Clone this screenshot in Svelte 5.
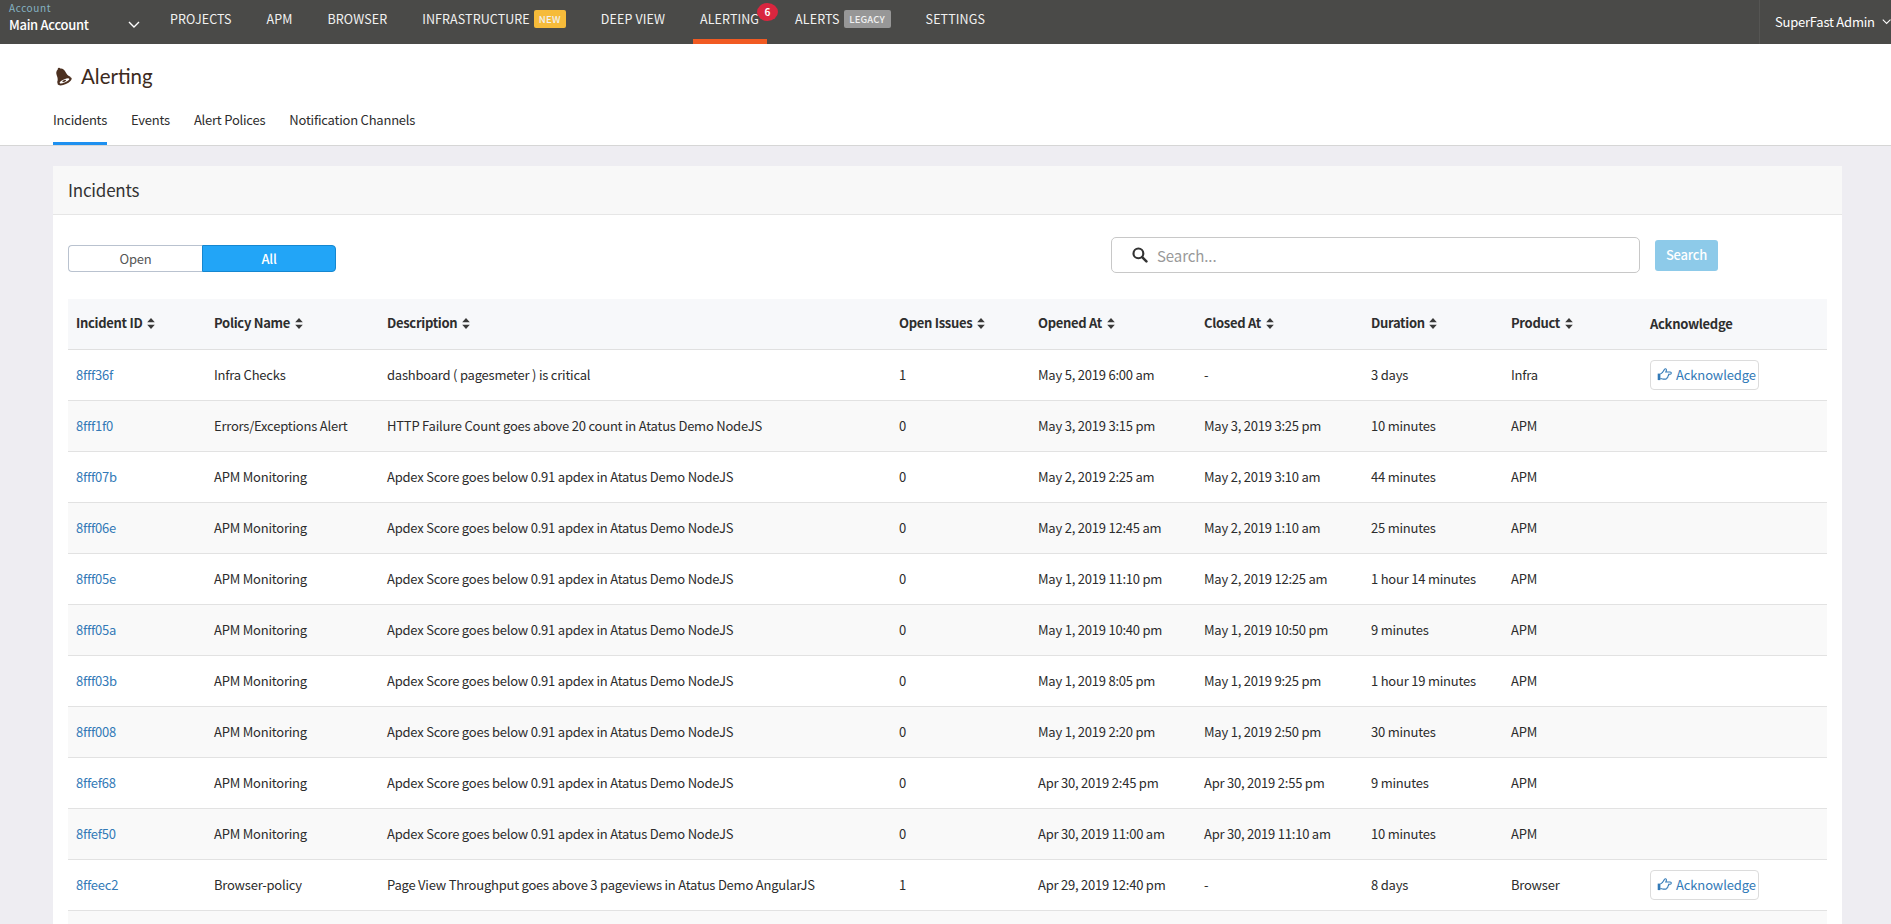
<script>
  const navItems = [
    { label: 'PROJECTS' },
    { label: 'APM' },
    { label: 'BROWSER' },
    { label: 'INFRASTRUCTURE', tag: 'NEW', tagClass: 'new' },
    { label: 'DEEP VIEW' },
    { label: 'ALERTING', active: true, count: 6 },
    { label: 'ALERTS', tag: 'LEGACY', tagClass: 'legacy' },
    { label: 'SETTINGS' }
  ];
  const tabs = ['Incidents', 'Events', 'Alert Polices', 'Notification Channels'];
  const cols = ['Incident ID', 'Policy Name', 'Description', 'Open Issues', 'Opened At', 'Closed At', 'Duration', 'Product'];
  const apdex = 'Apdex Score goes below 0.91 apdex in Atatus Demo NodeJS';
  const rows = [
    ['8fff36f', 'Infra Checks', 'dashboard ( pagesmeter ) is critical', '1', 'May 5, 2019 6:00 am', '-', '3 days', 'Infra', true],
    ['8fff1f0', 'Errors/Exceptions Alert', 'HTTP Failure Count goes above 20 count in Atatus Demo NodeJS', '0', 'May 3, 2019 3:15 pm', 'May 3, 2019 3:25 pm', '10 minutes', 'APM'],
    ['8fff07b', 'APM Monitoring', apdex, '0', 'May 2, 2019 2:25 am', 'May 2, 2019 3:10 am', '44 minutes', 'APM'],
    ['8fff06e', 'APM Monitoring', apdex, '0', 'May 2, 2019 12:45 am', 'May 2, 2019 1:10 am', '25 minutes', 'APM'],
    ['8fff05e', 'APM Monitoring', apdex, '0', 'May 1, 2019 11:10 pm', 'May 2, 2019 12:25 am', '1 hour 14 minutes', 'APM'],
    ['8fff05a', 'APM Monitoring', apdex, '0', 'May 1, 2019 10:40 pm', 'May 1, 2019 10:50 pm', '9 minutes', 'APM'],
    ['8fff03b', 'APM Monitoring', apdex, '0', 'May 1, 2019 8:05 pm', 'May 1, 2019 9:25 pm', '1 hour 19 minutes', 'APM'],
    ['8fff008', 'APM Monitoring', apdex, '0', 'May 1, 2019 2:20 pm', 'May 1, 2019 2:50 pm', '30 minutes', 'APM'],
    ['8ffef68', 'APM Monitoring', apdex, '0', 'Apr 30, 2019 2:45 pm', 'Apr 30, 2019 2:55 pm', '9 minutes', 'APM'],
    ['8ffef50', 'APM Monitoring', apdex, '0', 'Apr 30, 2019 11:00 am', 'Apr 30, 2019 11:10 am', '10 minutes', 'APM'],
    ['8ffeec2', 'Browser-policy', 'Page View Throughput goes above 3 pageviews in Atatus Demo AngularJS', '1', 'Apr 29, 2019 12:40 pm', '-', '8 days', 'Browser', true]
  ];
</script>

<div class="page">
  <header class="topbar">
    <div class="account">
      <div class="account-text">
        <span class="account-label">Account</span>
        <span class="account-name">Main Account</span>
      </div>
      <svg class="chev" width="12" height="7" viewBox="0 0 12 7"><path d="M1 1l5 5 5-5" fill="none" stroke="#fff" stroke-width="1.4"/></svg>
    </div>
    <nav class="nav">
      {#each navItems as item}
        <div class="nav-item" class:active={item.active}>
          <span>{item.label}</span>
          {#if item.tag}<span class="tag {item.tagClass}">{item.tag}</span>{/if}
          {#if item.count}<span class="count">{item.count}</span>{/if}
        </div>
      {/each}
    </nav>
    <div class="user">
      <span>SuperFast Admin</span>
      <svg width="12" height="7" viewBox="0 0 12 7"><path d="M1 1l5 5 5-5" fill="none" stroke="#fff" stroke-width="1.3"/></svg>
    </div>
  </header>

  <section class="subhead">
    <h1>
      <svg class="bell" width="19" height="20" viewBox="0 0 19 20">
        <g transform="rotate(-24 9.5 10)">
          <path d="M9 1c.9 0 1.400.5 1.500 1.200 2.300.6 3.300 2.700 3.400 5 .1 2.600.6 4.600 2.300 6.200.4.400.2 1-.4 1H2.600c-.6 0-.8-.6-.4-1 1.700-1.600 2.200-3.600 2.300-6.200.1-2.300 1.100-4.400 3.300-5C7.900 1.500 8.400 1 9 1z" fill="#4c3020"/>
          <ellipse cx="9.300" cy="15.600" rx="7.600" ry="3.200" fill="#4c3020"/>
          <ellipse cx="9.300" cy="15.300" rx="5.200" ry="1.500" fill="#fff"/>
          <ellipse cx="9" cy="15.300" rx="2" ry="0.900" fill="#4c3020"/>
        </g>
      </svg>
      <span>Alerting</span>
    </h1>
    <div class="tabs">
      {#each tabs as tab, i}
        <div class="tab" class:current={i === 0}>{tab}</div>
      {/each}
    </div>
  </section>

  <main class="content">
    <section class="card">
      <div class="card-head">Incidents</div>
      <div class="card-body">
        <div class="toolbar">
          <div class="toggle">
            <div class="opt">Open</div>
            <div class="opt on">All</div>
          </div>
          <div class="search-area">
            <div class="search">
              <svg width="16" height="16" viewBox="0 0 15 15"><circle cx="6" cy="6" r="4.600" fill="none" stroke="#333" stroke-width="2"/><path d="M9.500 9.500l4 4" stroke="#333" stroke-width="2.400" stroke-linecap="round"/></svg>
              <span>Search...</span>
            </div>
            <div class="search-btn">Search</div>
          </div>
        </div>

        <table>
          <colgroup>
            <col style="width:138px"/><col style="width:173px"/><col style="width:512px"/><col style="width:139px"/><col style="width:166px"/><col style="width:167px"/><col style="width:140px"/><col style="width:139px"/><col/>
          </colgroup>
          <thead>
            <tr>
              {#each cols as c}
                <th>
                  {c}
                  <svg class="sort" width="8" height="11" viewBox="0 0 8 11"><path d="M4 0l3.800 4.200H.2zM4 11L.2 6.800h7.600z" fill="#3a3a3a"/></svg>
                </th>
              {/each}
              <th class="ack-h">Acknowledge</th>
            </tr>
          </thead>
          <tbody>
            {#each rows as r}
              <tr>
                <td class="id">{r[0]}</td>
                {#each r.slice(1, 8) as v}<td>{v}</td>{/each}
                <td>
                  {#if r[8]}
                    <div class="ack">
                      <svg width="15" height="13" viewBox="0 0 15 13">
                        <path d="M3.400 6c1.500-.6 2.700-2 3.400-3.400.4-.8.500-1.900 1.500-1.900 1 0 1.400 1.100.9 2.300l-.4 1h4.400c.7 0 1.100.5 1.100 1.100s-.5 1.100-1.100 1.100h-1.500c.2.900-.1 1.500-.7 1.800.1.800-.2 1.400-.8 1.600 0 1-.6 1.500-1.500 1.500H6.300c-1 0-1.800-.4-2.900-.6" fill="none" stroke="#337ab7" stroke-width="1.100"/>
                        <path d="M.7 5.600h2.700v6.500H.7z" fill="#337ab7"/>
                      </svg>
                      <span>Acknowledge</span>
                    </div>
                  {/if}
                </td>
              </tr>
            {/each}
            <tr class="blank"><td colspan="9"></td></tr>
          </tbody>
        </table>
      </div>
    </section>
  </main>
</div>

<style>
  :global(body) {
    margin: 0;
    background: #eeedf2;
  }
  .page {
    height: 924px;
    overflow: hidden;
    font-family: "Noto Sans CJK SC", "Noto Sans", sans-serif;
    font-size: 13px;
    letter-spacing: -0.22px;
    color: #2c2c2c;
    background: #eeedf2;
  }
  .topbar {
    height: 44px;
    background: #4a4a48;
    display: flex;
    color: #fff;
  }
  .account {
    width: 163px;
    flex-shrink: 0;
    box-sizing: border-box;
    padding-left: 9px;
    display: flex;
    position: relative;
  }
  .account-text {
    display: flex;
    flex-direction: column;
    padding-top: 2px;
  }
  .account-label {
    font-size: 10px;
    line-height: 12px;
    letter-spacing: 0.6px;
    color: #86b4c4;
  }
  .account-name {
    font-size: 13px;
    line-height: 18px;
    font-weight: 500;
    margin-top: 2px;
    letter-spacing: -0.3px;
  }
  .chev {
    position: absolute;
    left: 128px;
    top: 21px;
  }
  .nav {
    display: flex;
    flex: 1;
    gap: 21px;
  }
  .nav-item {
    position: relative;
    display: flex;
    align-items: flex-start;
    padding: 10px 7px 0;
    box-sizing: border-box;
    height: 44px;
    font-size: 12.5px;
    line-height: 18px;
    letter-spacing: 0.1px;
    color: #f1f1f1;
  }
  .nav-item.active {
    padding-right: 8px;
    border-bottom: 5px solid #f15a22;
  }
  .tag {
    margin-left: 4px;
    height: 18px;
    line-height: 19px;
    font-size: 9.5px;
    border-radius: 2px;
    text-align: center;
    letter-spacing: 0.3px;
    font-weight: 500;
  }
  .new { width: 32px; background: #f6bb3a; }
  .legacy { width: 47px; background: #979797; letter-spacing: 0.2px; }
  .count {
    position: absolute;
    left: 64px;
    top: 3px;
    width: 21px;
    height: 18px;
    border-radius: 50%;
    background: #d9263f;
    color: #fff;
    font-size: 10px;
    line-height: 17px;
    letter-spacing: 0;
    text-align: center;
    font-weight: 700;
  }
  .user {
    width: 132px;
    flex-shrink: 0;
    white-space: nowrap;
    box-sizing: border-box;
    border-left: 1px solid #555553;
    padding-left: 15px;
    display: flex;
    align-items: center;
    gap: 7px;
    font-size: 13px;
    height: 44px;
    padding-bottom: 1px;
  }
  .subhead {
    height: 101px;
    background: #fff;
    border-bottom: 1px solid #d6d6d6;
    padding-left: 53px;
  }
  h1 {
    margin: 0;
    padding-top: 19px;
    display: flex;
    align-items: center;
    gap: 9px;
    font-family: Lato, sans-serif;
    font-weight: 400;
    font-size: 20.5px;
    letter-spacing: 0;
    line-height: 26px;
    color: #3c2a20;
    height: 26px;
  }
  .tabs {
    display: flex;
    gap: 24px;
    margin-top: 16px;
  }
  .tab {
    height: 40px;
    box-sizing: border-box;
    padding-top: 5px;
    line-height: 20px;
    color: #2d2d2d;
  }
  .tab.current { border-bottom: 3px solid #1e90f0; }
  .content { padding: 20px 49px 0 53px; }
  .card {
    background: #fff;
    border-radius: 2px;
  }
  .card-head {
    height: 48px;
    background: #f8f8f8;
    border-bottom: 1px solid #e6e6e6;
    padding-left: 15px;
    font-size: 17px;
    line-height: 48px;
    color: #333;
  }
  .card-body { padding: 22px 15px 0; }
  .toolbar {
    display: flex;
    justify-content: space-between;
    height: 62px;
  }
  .toggle {
    display: flex;
    margin-top: 8px;
    height: 27px;
  }
  .opt {
    width: 134px;
    box-sizing: border-box;
    text-align: center;
    line-height: 25px;
    border: 1px solid #b9c2cf;
    color: #555;
    border-right: 0;
    border-radius: 4px 0 0 4px;
  }
  .opt.on {
    background: #22a5f7;
    border: 1px solid #1587d0;
    color: #fff;
    border-radius: 0 4px 4px 0;
    font-weight: 500;
  }
  .search-area {
    display: flex;
    align-items: flex-start;
    gap: 15px;
    margin-right: 109px;
  }
  .search {
    width: 529px;
    height: 36px;
    box-sizing: border-box;
    border: 1px solid #c8c8c8;
    border-radius: 5px;
    display: flex;
    align-items: center;
    gap: 9px;
    padding-left: 20px;
    font-size: 15px;
    letter-spacing: -0.1px;
    color: #999;
  }
  .search-btn {
    width: 63px;
    height: 31px;
    margin-top: 3px;
    background: #8dcae9;
    color: #fff;
    border-radius: 3px;
    text-align: center;
    line-height: 30px;
    font-weight: 500;
  }
  table {
    width: 1759px;
    border-collapse: collapse;
    table-layout: fixed;
  }
  th {
    height: 50px;
    padding: 0 0 2px 8px;
    box-sizing: border-box;
    text-align: left;
    font-weight: 700;
    letter-spacing: -0.3px;
    background: #f7f8fa;
    border-bottom: 1px solid #e0e0e0;
    color: #2e2e2e;
  }
  th.ack-h { padding-bottom: 0; }
  .sort { margin-left: 2px; vertical-align: -1px; }
  td {
    height: 50px;
    padding: 0 0 0 8px;
    border-bottom: 1px solid #e2e2e2;
    color: #2c2c2c;
    white-space: nowrap;
  }
  tbody tr:nth-child(even) td { background: #f9f9f9; }
  .id { color: #337ab7; }
  .ack {
    width: 109px;
    height: 30px;
    box-sizing: border-box;
    border: 1px solid #dcdcdc;
    border-radius: 4px;
    display: flex;
    align-items: center;
    gap: 4px;
    padding-left: 6px;
    letter-spacing: -0.12px;
    color: #337ab7;
    background: #fff;
  }
  .ack svg { flex-shrink: 0; }
</style>
